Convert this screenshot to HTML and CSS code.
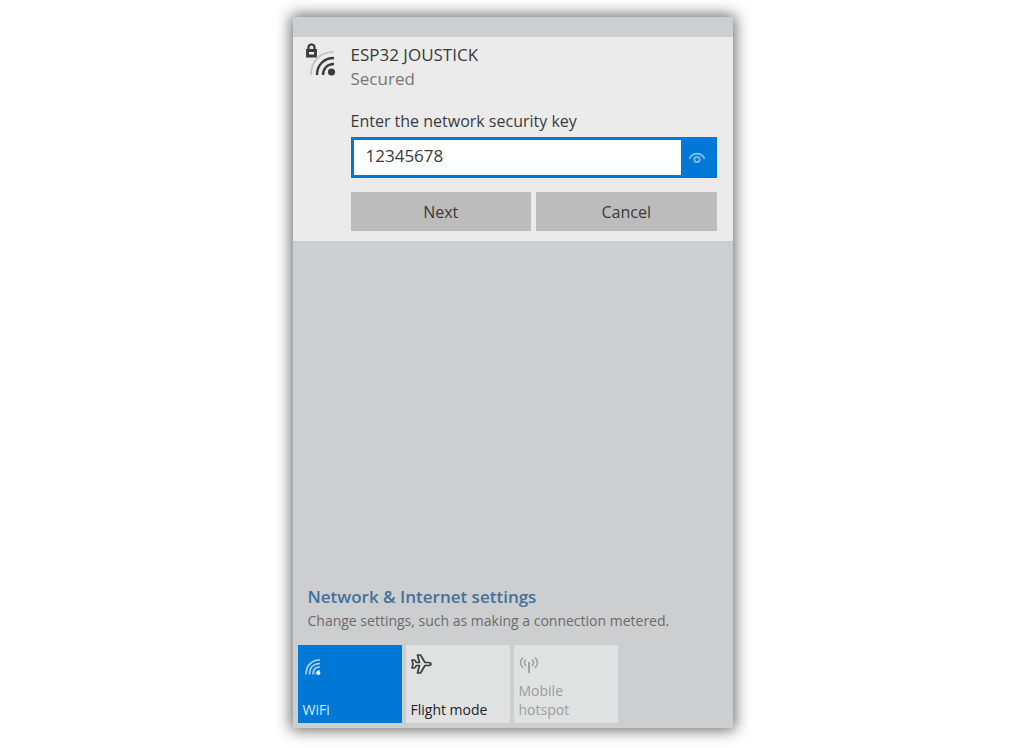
FILE: index.html
```html
<!DOCTYPE html>
<html lang="en">
<head>
<meta charset="utf-8">
<meta name="viewport" content="width=device-width, initial-scale=1">
<title>Network flyout</title>
<link rel="stylesheet" href="styles.css">
</head>
<body>
<main class="flyout">
  <section class="network">
    <svg class="network-icon" width="32" height="36" viewBox="0 0 32 36" aria-hidden="true">
      <g fill="none" stroke="#3b3b3b" stroke-width="2.400">
        <path stroke="#c3c6c6" stroke-width="1.800" d="M6 32C6 18 15 9 29 9"/>
        <path d="M12 32C12 22 19 15 29 15"/>
        <path d="M18 32C18 26 22 21 29 21"/>
        <path d="M3.500 7V4.500a3 3 0 0 1 6 0V7" stroke-width="2.200"/>
        <path d="M2.500 7.500h8v5.500h-8z" stroke-width="2.800"/>
      </g>
      <circle cx="26.500" cy="29" r="3.600" fill="#3b3b3b"/>
    </svg>
    <form class="network-form">
      <h1 class="name">ESP32 JOUSTICK</h1>
      <p class="status">Secured</p>
      <label class="key-label" for="key">Enter the network security key</label>
      <div class="key-box">
        <input class="key-input" id="key" type="text" value="12345678">
        <button class="reveal" type="button" aria-label="Show key">
          <svg width="18" height="14" viewBox="0 0 18 14" fill="none" stroke="#7dbcf2" stroke-width="1.800" aria-hidden="true">
            <path d="M1.500 8C4 1 14 1 16.500 8"/>
            <circle cx="9" cy="8.500" r="2.700"/>
          </svg>
        </button>
      </div>
      <div class="actions">
        <button class="action" type="button">Next</button>
        <button class="action" type="button">Cancel</button>
      </div>
    </form>
  </section>
  <footer class="footer">
    <div class="settings">
      <a class="settings-link" href="#">Network &amp; Internet settings</a>
      <p class="settings-hint">Change settings, such as making a connection metered.</p>
    </div>
    <div class="tiles">
      <button class="tile tile-on" type="button">
        <svg width="22" height="22" viewBox="0 0 22 22" fill="none" stroke="#a9d4f8" stroke-width="1.700" aria-hidden="true">
          <path d="M3 21.500C3 13 8 7 17 7"/>
          <path d="M6.500 21.500C6.500 15 10 10.500 17 10.500"/>
          <path d="M10 21.500C10 17 12.500 14 17 14"/>
          <path d="M13 21.500Q13 17.500 17 17.500" stroke-width="1.200"/>
          <circle cx="15.500" cy="20" r="1.900" fill="#fff" stroke="none"/>
        </svg>
        <span>WiFi</span>
      </button>
      <button class="tile" type="button">
        <svg width="22" height="22" viewBox="0 0 22 22" fill="none" stroke="#3c3c3c" stroke-width="1.700" stroke-linejoin="round" aria-hidden="true">
          <path d="M1 7H3.500l2 2.500h3L6.500 2h3l4.500 7.500H17q3 0 3 1.500t-3 1.500h-3l-4.500 7.500h-3L8.500 12.500h-3L3.500 15H1l1-4z"/>
        </svg>
        <span>Flight mode</span>
      </button>
      <button class="tile" type="button" disabled>
        <svg width="22" height="22" viewBox="0 0 22 22" fill="none" stroke="#a0a2a2" stroke-width="1.600" aria-hidden="true">
          <path d="M4 4.500Q-1 9.500 4 15M16 4.500Q21 9.500 16 15M7 6.500Q4 9.500 7 13M13 6.500Q16 9.500 13 13"/>
          <path d="M10 9v11" stroke-width="2"/>
        </svg>
        <span>Mobile hotspot</span>
      </button>
    </div>
  </footer>
</main>
</body>
</html>
```

FILE: styles.css
```css
* {
  box-sizing: border-box;
}

body {
  margin: 0;
  min-height: 100vh;
  display: flex;
  justify-content: center;
  padding: 17px 16px 20px 17px;
  background: #fff;
  color: #3a3a3a;
  font-family: "Open Sans", "Noto Sans", sans-serif;
  font-size: 16px;
}

h1,
p {
  margin: 0;
}

button,
input {
  border: 0;
  border-radius: 0;
  font: inherit;
  color: inherit;
}

.flyout {
  width: 100%;
  max-width: 440px;
  display: flex;
  flex-direction: column;
  justify-content: space-between;
  padding-top: 20px;
  background: #cdced0;
  box-shadow: 0 0 14px 2px rgba(0, 0, 0, 0.6);
}

.network {
  display: flex;
  gap: 14px;
  padding: 6px 16px 10px 12px;
  background: #ebebeb;
}

.network-icon {
  flex: none;
}

.network-form {
  flex: 1;
  min-width: 0;
}

.name {
  font-size: 17px;
  font-weight: 400;
  line-height: 24px;
}

.status {
  color: #777;
  font-size: 17px;
  line-height: 24px;
}

.key-label {
  display: block;
  padding-top: 18px;
  line-height: 24px;
}

.key-box {
  display: flex;
  height: 41px;
  margin-top: 4px;
  border: 3px solid #0078d7;
  background: #fff;
}

.key-input {
  flex: 1;
  min-width: 0;
  padding: 0 12px 4px;
  background: none;
  outline: 0;
  font-size: 17px;
}

.reveal {
  width: 33px;
  padding: 0;
  display: grid;
  place-items: center;
  background: #0078d7;
}

.actions {
  display: flex;
  gap: 5px;
  margin-top: 14px;
}

.action {
  flex: 1;
  height: 39px;
  padding: 0;
  background: #bcbcbc;
  font-weight: 500;
}

.footer {
  padding: 0 5px 5px;
}

.settings {
  padding: 0 10px 12px;
}

.settings-link {
  display: block;
  color: #42729b;
  font-size: 17px;
  font-weight: 600;
  line-height: 24px;
  text-decoration: none;
}

.settings-hint {
  color: #6b6b6b;
  font-size: 14px;
  line-height: 24px;
}

.tiles {
  display: flex;
  gap: 4px;
}

.tile {
  width: 104px;
  height: 78px;
  display: flex;
  flex-direction: column;
  align-items: flex-start;
  justify-content: space-between;
  padding: 8px 5px 4px;
  background: #e0e2e1;
  color: #222;
  font-size: 14px;
  line-height: 19px;
  text-align: left;
}

.tile-on {
  background: #0078d7;
  color: #d5eafb;
}

.tile:disabled {
  color: #9b9d9d;
}
```
